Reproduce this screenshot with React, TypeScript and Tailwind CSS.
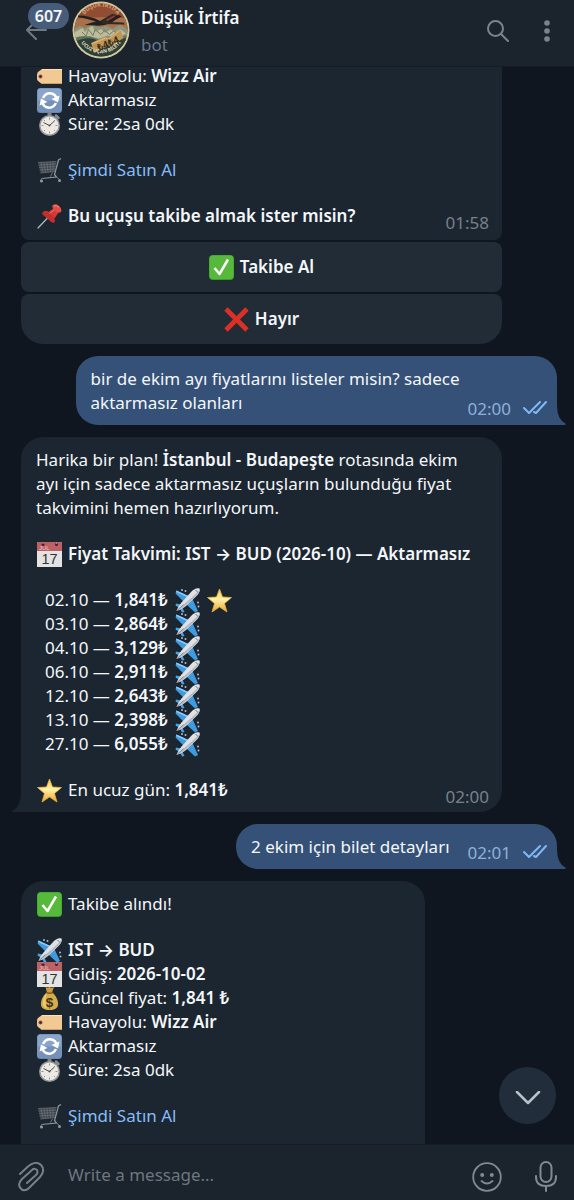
import type { ReactNode } from "react";

const emojiClass = "block size-[25px] shrink-0";

function Plane() {
  return (
    <svg viewBox="0 0 50 50" className={emojiClass} aria-hidden="true">
      <path d="M29 17 3 5 1 11 18 28Z" fill="#3f9be0" />
      <path d="M34 20 46 46 40 49 22 32Z" fill="#3f9be0" />
      <path d="M3 5 29 17 26 19 2 8Z" fill="#8fcbf5" />
      <path d="M12 33 2 31 1 35 9 40Z M15 40 19 48 14 49 10 41Z" fill="#4aa3e4" />
      <circle cx="14" cy="4" r="2" fill="#aebac7" />
      <circle cx="21" cy="6" r="2" fill="#aebac7" />
      <circle cx="46" cy="29" r="2" fill="#aebac7" />
      <circle cx="47" cy="37" r="2" fill="#aebac7" />
      <path d="M49 1C43-1 38 2 33 7L13 29C9 34 5 40 3 46 10 44 17 40 22 36L43 16C48 11 51 6 49 1Z" fill="#dfe1e5" />
      <path d="M49 4C49 9 45 13 41 17L20 36C15 40 9 43 3 46 10 38 35 20 49 4Z" fill="#b4b8c0" />
      <path d="M4 45 17 33" stroke="#66707c" strokeWidth="1.5" />
      <path d="m41 4 5 5" stroke="#4b5663" strokeWidth="1.5" />
    </svg>
  );
}

function Calendar() {
  return (
    <svg viewBox="0 0 50 50" className={emojiClass} aria-hidden="true">
      <rect width="50" height="50" rx="1" fill="#e3e3e3" />
      <rect width="50" height="18" rx="1" fill="#bd6166" />
      <circle cx="12" cy="5" r="3" fill="#4c1f25" />
      <circle cx="39" cy="5" r="3" fill="#4c1f25" />
      <path d="M12 0v4M39 0v4" stroke="#8b8f96" strokeWidth="2" />
      <text x="4" y="16" fontSize="12" fill="#eac4c6" fontFamily="Liberation Sans, sans-serif">JUL</text>
      <text x="25" y="44" fontSize="29" textAnchor="middle" fill="#333" fontFamily="Liberation Sans, sans-serif">17</text>
    </svg>
  );
}

function MoneyBag() {
  return (
    <svg viewBox="0 0 50 50" className={emojiClass} aria-hidden="true">
      <path d="M17 2q4 3 8 0 4 3 9 0l-4 11H20Z" fill="#c99d3d" />
      <path d="M20 12C12 19 7 29 8 38c1 7 7 10 17 10s16-3 17-10c1-9-4-19-12-26Z" fill="#d7ad4c" />
      <path d="M20 13c-6 6-9 15-8 24 1 5 4 7 8 8-4-10-4-22 0-32Z" fill="#ecca70" />
      <path d="M18 13q7 3 14 0" fill="none" stroke="#7b5720" strokeWidth="3" />
      <text x="25" y="41" fontSize="27" fontWeight="700" textAnchor="middle" fill="#3d3115" fontFamily="Liberation Sans, sans-serif">$</text>
    </svg>
  );
}

function Tag() {
  return (
    <svg viewBox="0 0 50 50" className={emojiClass} aria-hidden="true">
      <path d="M10 10H50V40H10L2 34Q0 32 0 29V21Q0 18 2 16Z" fill="#f1c992" />
      <path d="M10 10H50v2H10Z" fill="#ffe0b3" />
      <path d="M7 38h43v2H10Z" fill="#d09f63" />
      <circle cx="7" cy="25" r="4" fill="#8c4d41" />
      <circle cx="7" cy="25" r="2" fill="#392229" />
    </svg>
  );
}

function Cycle() {
  return (
    <svg viewBox="0 0 50 50" className={emojiClass} aria-hidden="true">
      <rect width="50" height="50" rx="7" fill="#6685af" />
      <rect x="1" y="1" width="48" height="46" rx="6" fill="#8aa5c9" />
      <path d="M2 25h46v16q0 7-7 7H9q-7 0-7-7Z" fill="#7591b9" />
      <path d="M12 20Q19 7 32 12q5 2 7 8" fill="none" stroke="#fff" strokeWidth="5" />
      <path d="m45 15-3 14-13-7Z" fill="#fff" />
      <path d="M38 30Q31 43 18 38q-5-2-7-8" fill="none" stroke="#fff" strokeWidth="5" />
      <path d="m5 35 3-14 13 7Z" fill="#fff" />
    </svg>
  );
}

function Stopwatch() {
  return (
    <svg viewBox="0 0 50 50" className={emojiClass} aria-hidden="true">
      <rect x="21" y="0" width="8" height="8" rx="2" fill="#81858a" />
      <path d="m38 7 5 5" stroke="#888d93" strokeWidth="5" strokeLinecap="round" />
      <circle cx="25" cy="27" r="21" fill="#96989b" />
      <circle cx="25" cy="27" r="18" fill="#ece9e2" />
      <path d="M25 11v4M25 39v4M9 27h4M37 27h4M14 16l2 2M36 16l-2 2M14 38l2-2M36 38l-2-2" stroke="#77797c" strokeWidth="1.5" />
      <path d="m13 21 12 6 10-9" fill="none" stroke="#4d4e52" strokeWidth="2" />
      <circle cx="25" cy="27" r="2" fill="#4d4e52" />
    </svg>
  );
}

function Cart() {
  return (
    <svg viewBox="0 0 50 50" className={emojiClass} aria-hidden="true">
      <path d="M2 9 39 7 36 27 7 30Z" fill="#3d434a" />
      <path d="M2 9 39 7M3 14l35-2M4 19l33-2M5 24l32-2M7 30l29-3M8 9l4 20M14 9l3 20M20 8l2 20M26 8l1 20M32 8v19" stroke="#6b7179" strokeWidth="1.5" />
      <path d="M48 1 43 4 35 33 39 38 9 41" fill="none" stroke="#8e949a" strokeWidth="2.5" />
      <path d="M10 41 6 46M39 38l6 5M31 29l-4 8" stroke="#6e757d" strokeWidth="2" />
      <circle cx="9" cy="46" r="3" fill="#95999d" />
      <circle cx="45" cy="45" r="3" fill="#95999d" />
    </svg>
  );
}

function Pin() {
  return (
    <svg viewBox="0 0 50 50" className={emojiClass} aria-hidden="true">
      <path d="M2 48 22 27" stroke="#aeb8c2" strokeWidth="2.5" strokeLinecap="round" />
      <path d="M11 17q5-6 13-1l9 10q6 8 0 12-5-1-10-7L12 22q-3-3-1-5Z" fill="#c62e2c" />
      <path d="m23 16 12-9 8 10-8 12Z" fill="#d43a35" />
      <path d="M31 3q5-5 12 0 8 6 5 13-6 4-13-3-6-6-4-10Z" fill="#e34b44" />
      <path d="M34 4q5-3 10 3" fill="none" stroke="#f58a80" strokeWidth="2" />
      <path d="m25 19 9-7" stroke="#f07970" strokeWidth="2" />
    </svg>
  );
}

function Check() {
  return (
    <svg viewBox="0 0 50 50" className={emojiClass} aria-hidden="true">
      <rect width="50" height="50" rx="8" fill="#3b9c2c" />
      <rect x="1" y="1" width="48" height="47" rx="7" fill="#56b93c" />
      <path d="M11 26 21 38 38 9" fill="none" stroke="#fff" strokeWidth="5" strokeLinejoin="round" />
    </svg>
  );
}

function Cross() {
  return (
    <svg viewBox="0 0 50 50" className={emojiClass} aria-hidden="true">
      <path d="m4 4 42 42M46 4 4 46" stroke="#dc3026" strokeWidth="9.500" />
    </svg>
  );
}

function Star() {
  return (
    <svg viewBox="0 0 50 50" className={emojiClass} aria-hidden="true">
      <defs>
        <linearGradient id="gold" x1="0" y1="0" x2="0" y2="1">
          <stop offset="0" stopColor="#f5c84a" />
          <stop offset=".45" stopColor="#fff2a6" />
          <stop offset="1" stopColor="#eda32b" />
        </linearGradient>
      </defs>
      <path d="m25 2 6 16 18 1-14 12 5 17-15-10-15 10 5-17L1 19l18-1Z" fill="url(#gold)" stroke="#e9b445" strokeWidth="1.5" strokeLinejoin="round" />
    </svg>
  );
}

function Avatar() {
  return (
    <svg viewBox="0 0 116 116" className="block size-[58px] shrink-0" role="img" aria-label="Düşük İrtifa">
      <defs>
        <clipPath id="disc"><circle cx="58" cy="58" r="53" /></clipPath>
        <path id="arcTop" d="M17 52A41 41 0 0 1 99 52" />
        <path id="arcBottom" d="M11 66A48 48 0 0 0 105 66" />
      </defs>
      <circle cx="58" cy="58" r="57" fill="#cfc8a2" />
      <g clipPath="url(#disc)">
        <rect width="116" height="116" fill="#3a4c3e" />
        <rect width="116" height="56" fill="#914c34" />
        <path d="M0 38q30-9 116-3v24H0Z" fill="#a9714a" />
        <path d="M0 60 16 50 27 55 40 43 55 53 68 49 81 56 96 47 116 60V82H0Z" fill="#8f957b" />
        <path d="m6 62 15-8 5 8 14-13 7 12 11-5 8 7 12-6 8 5 10-6 12 9-17 8-20-4-18 6-17-5-18 7-14-4Z" fill="#bdbc9c" />
        <path d="m20 62 8 8 5-13 9 12 4-12 12 10 7-8 10 8 8-7 12 7" fill="none" stroke="#6f7c68" strokeWidth="2" />
        <path d="M5 74q20-8 40 0t63-5v18H5Z" fill="#5f7259" />
        <path d="M2 84q28-16 49-5t65-9v46H0Z" fill="#2c4038" />
        <path d="m38 84 28-13 6 4 24-19 7 17-22 18-6-2-31 14Z" fill="#bf9656" />
        <path d="m40 86 27-12 5 3 23-17" fill="none" stroke="#ddbd7c" strokeWidth="2" />
      </g>
      <g fontFamily="Noto Sans, sans-serif" fontWeight="700">
        <text fontSize="11" fill="#d9a06f"><textPath href="#arcTop" startOffset="50%" textAnchor="middle">DÜŞÜK İRTİFA</textPath></text>
        <text fontSize="10" fill="#e2ddbb"><textPath href="#arcBottom" startOffset="50%" textAnchor="middle">UCUZ UÇAN BİLETİ</textPath></text>
        <text x="72" y="92" fontSize="20" textAnchor="middle" transform="rotate(-24 72 85)" fill="#392e1f">₺4₺4</text>
      </g>
      <path d="M12 29q25 0 44 11l30-11q9-3 13 2-12 6-19 12-17 8-35 6L25 48q15-6 23-7Q33 36 12 32Z" fill="#23211f" />
      <path d="M56 40 80 26l8 1-16 15 31 1 3 4-45-1Z" fill="#2d2b28" />
      <path d="M69 39 85 30" stroke="#963b2c" strokeWidth="4" />
    </svg>
  );
}

function Row({ icon, children }: { icon: ReactNode; children: ReactNode }) {
  return (
    <div className="flex h-6 items-center gap-[6px] pl-px">
      {icon}
      <span className="whitespace-nowrap">{children}</span>
    </div>
  );
}

function Gap() {
  return <div className="h-[22px]" />;
}

function Arrow() {
  return <span className="font-['Inter']">→</span>;
}

function FlightRows() {
  return (
    <>
      <Row icon={<Tag />}>Havayolu: <b className="font-semibold">Wizz Air</b></Row>
      <Row icon={<Cycle />}>Aktarmasız</Row>
      <Row icon={<Stopwatch />}>Süre: 2sa 0dk</Row>
      <Gap />
      <Row icon={<Cart />}>
        <a href="#buy" className="text-[#86bdf8]">Şimdi Satın Al</a>
      </Row>
    </>
  );
}

function Outgoing({ time, wide = false, children }: { time: string; wide?: boolean; children: ReactNode }) {
  return (
    <div className="relative flex max-w-full items-end self-end rounded-[22px] rounded-br-none bg-[#355178] pt-[11px] pr-[9px] pb-[10px] pl-[15px]">
      <p className={wide ? "mr-2" : "mr-[18px]"}>{children}</p>
      <div className="-mb-[6px] flex items-center gap-[12px] text-[#8fb0da]">
        <time>{time}</time>
        <svg viewBox="0 0 25 16" className="-mt-1 h-4 w-[25px]" fill="none" stroke="#7fb9f5" strokeWidth="2" strokeLinecap="round" strokeLinejoin="round" role="img" aria-label="Okundu">
          <path d="m1 9 5 5L17 3M11 13l2 1L23 3" />
        </svg>
      </div>
      <svg viewBox="0 0 9 20" className="absolute bottom-0 left-full h-5 w-[9px]" aria-hidden="true">
        <path d="M0 0Q0 15 9 19Q9 20 7 20H0Z" fill="#355178" />
      </svg>
    </div>
  );
}

const prices = [
  ["02.10", "1,841₺"],
  ["03.10", "2,864₺"],
  ["04.10", "3,129₺"],
  ["06.10", "2,911₺"],
  ["12.10", "2,643₺"],
  ["13.10", "2,398₺"],
  ["27.10", "6,055₺"],
];

export default function App() {
  return (
    <div className="flex h-screen flex-col overflow-hidden bg-[#0f161f] font-['Noto_Sans','Open_Sans',sans-serif] text-[17px] leading-6 text-[#f4f7fa]">
      <header className="relative z-10 flex h-[67px] shrink-0 items-start border-b border-[#151c25] bg-[#1b232c]">
        <button aria-label="Geri" className="relative h-full w-[72px] shrink-0">
          <svg viewBox="0 0 22 20" className="absolute top-5 left-[25px] h-5 w-[22px]" fill="none" stroke="#707983" strokeWidth="2" strokeLinecap="round" strokeLinejoin="round" aria-hidden="true">
            <path d="M21 10H2M11 1 2 10l9 9" />
          </svg>
          <span className="absolute top-[3px] left-[28px] flex h-[26px] w-[41px] items-center justify-center rounded-full bg-[#475c79] text-[16px] font-semibold">607</span>
        </button>
        <div className="mt-px"><Avatar /></div>
        <div className="ml-[11px] flex-1 pt-[6px]">
          <h1 className="font-semibold">Düşük İrtifa</h1>
          <p className="mt-[3px] text-[#68788c]">bot</p>
        </div>
        <button aria-label="Ara" className="mt-5 mr-[35px]">
          <svg viewBox="0 0 22 22" className="size-[22px]" fill="none" stroke="#7b838c" strokeWidth="2" strokeLinecap="round" aria-hidden="true">
            <circle cx="8.5" cy="8.5" r="7.5" />
            <path d="m14 14 7 7" />
          </svg>
        </button>
        <button aria-label="Menü" className="mt-5 mr-6">
          <svg viewBox="0 0 6 22" className="h-[22px] w-[6px]" fill="#7b838c" aria-hidden="true">
            <circle cx="3" cy="3" r="2.800" />
            <circle cx="3" cy="11" r="2.800" />
            <circle cx="3" cy="19" r="2.800" />
          </svg>
        </button>
      </header>

      <main className="relative -mt-[3px] min-h-0 flex-1 overflow-hidden">
        <div className="flex h-full flex-col gap-3 overflow-hidden pr-[17px] pl-[21px]">
          <section className="flex w-[481px] max-w-full shrink-0 flex-col gap-[2px]">
            <div className="flex items-end justify-between rounded-b-lg bg-[#1c2630] pr-[13px] pb-3 pl-[15px]">
              <div>
                <FlightRows />
                <Gap />
                <Row icon={<Pin />}><b className="font-semibold">Bu uçuşu takibe almak ister misin?</b></Row>
              </div>
              <time className="-mb-[7px] text-[#78818b]">01:58</time>
            </div>
            <button className="flex h-[50px] items-center justify-center gap-[6px] rounded-lg bg-[#212c37] font-semibold">
              <Check />Takibe Al
            </button>
            <button className="flex h-[50px] items-center justify-center gap-[6px] rounded-lg rounded-b-[22px] bg-[#212c37] font-semibold">
              <Cross />Hayır
            </button>
          </section>

          <Outgoing time="02:00" wide>bir de ekim ayı fiyatlarını listeler misin? sadece<br />aktarmasız olanları</Outgoing>

          <section className="relative w-[481px] max-w-full shrink-0 rounded-[22px] rounded-bl-none bg-[#1c2630] pt-[11px] pr-[13px] pb-[10px] pl-[15px]">
            <p>
              Harika bir plan! <b className="font-semibold">İstanbul - Budapeşte</b> rotasında ekim<br />
              ayı için sadece aktarmasız uçuşların bulunduğu fiyat<br />
              takvimini hemen hazırlıyorum.
            </p>
            <Gap />
            <Row icon={<Calendar />}><b className="font-semibold">Fiyat Takvimi: IST <Arrow /> BUD (2026-10) — Aktarmasız</b></Row>
            <Gap />
            <ul className="pl-[9px]">
              {prices.map(([date, price], i) => (
                <li key={date} className="flex h-6 items-center gap-[7px]">
                  <span>{date} — <b className="font-semibold">{price}</b></span>
                  <Plane />
                  {i === 0 && <Star />}
                </li>
              ))}
            </ul>
            <Gap />
            <div className="flex items-end justify-between">
              <Row icon={<Star />}>En ucuz gün: <b className="font-semibold">1,841₺</b></Row>
              <time className="-mb-[7px] text-[#78818b]">02:00</time>
            </div>
            <svg viewBox="0 0 9 20" className="absolute right-full bottom-0 h-5 w-[9px]" aria-hidden="true">
              <path d="M9 0Q9 15 0 19Q0 20 2 20H9Z" fill="#1c2630" />
            </svg>
          </section>

          <Outgoing time="02:01">2 ekim için bilet detayları</Outgoing>

          <section className="w-[404px] max-w-full shrink-0 rounded-[22px] bg-[#1c2630] px-[15px] pt-[11px] pb-16">
            <Row icon={<Check />}>Takibe alındı!</Row>
            <Gap />
            <Row icon={<Plane />}><b className="font-semibold">IST <Arrow /> BUD</b></Row>
            <Row icon={<Calendar />}>Gidiş: <b className="font-semibold">2026-10-02</b></Row>
            <Row icon={<MoneyBag />}>Güncel fiyat: <b className="font-semibold">1,841 ₺</b></Row>
            <FlightRows />
          </section>
        </div>
        <button aria-label="En alta in" className="absolute right-[18px] bottom-[20px] flex size-[57px] items-center justify-center rounded-full bg-[#212d3a]">
          <svg viewBox="0 0 26 14" className="mt-1 h-[14px] w-[26px]" fill="none" stroke="#b9c1ca" strokeWidth="2.5" strokeLinecap="round" strokeLinejoin="round" aria-hidden="true">
            <path d="m2 1 11 11L24 1" />
          </svg>
        </button>
      </main>

      <footer className="flex h-14 shrink-0 items-center border-t border-[#151c25] bg-[#1b232c] pt-1 pr-[17px] pl-[18px]">
        <button aria-label="Dosya ekle" className="mt-1">
          <svg viewBox="0 0 28 30" className="h-[30px] w-7" fill="none" stroke="#777f88" strokeWidth="2" strokeLinecap="round" strokeLinejoin="round" aria-hidden="true">
            <path d="M2 12 10 4.500C15 0 20 0 23 3 26 6 26 11 22 15L11 26C8 29 4 29 2.500 26 0 23 1 20 4 17L14 8C16 6 18 7 19 8 20 10 20 11 18 13L9 21" />
          </svg>
        </button>
        <input aria-label="Mesaj" placeholder="Write a message..." className="ml-[22px] h-8 min-w-0 flex-1 bg-transparent outline-none placeholder:text-[#6d7680]" />
        <button aria-label="Emoji" className="mt-1 mr-[33px]">
          <svg viewBox="0 0 30 30" className="size-[30px]" fill="none" stroke="#818991" strokeWidth="1.8" strokeLinecap="round" aria-hidden="true">
            <circle cx="15" cy="15" r="13.800" />
            <circle cx="10.200" cy="13" r="2" fill="#818991" stroke="none" />
            <circle cx="19.800" cy="13" r="2" fill="#818991" stroke="none" />
            <path d="M9.500 19q5.500 5 11 0" />
          </svg>
        </button>
        <button aria-label="Sesli mesaj" className="mt-1">
          <svg viewBox="0 0 22 31" className="h-[31px] w-[22px]" fill="none" stroke="#818991" strokeWidth="2" strokeLinecap="round" aria-hidden="true">
            <rect x="5.500" y="1" width="11" height="20" rx="5.500" />
            <path d="M1 15v1q0 9 10 9t10-9v-1M11 25v5" />
          </svg>
        </button>
      </footer>
    </div>
  );
}
